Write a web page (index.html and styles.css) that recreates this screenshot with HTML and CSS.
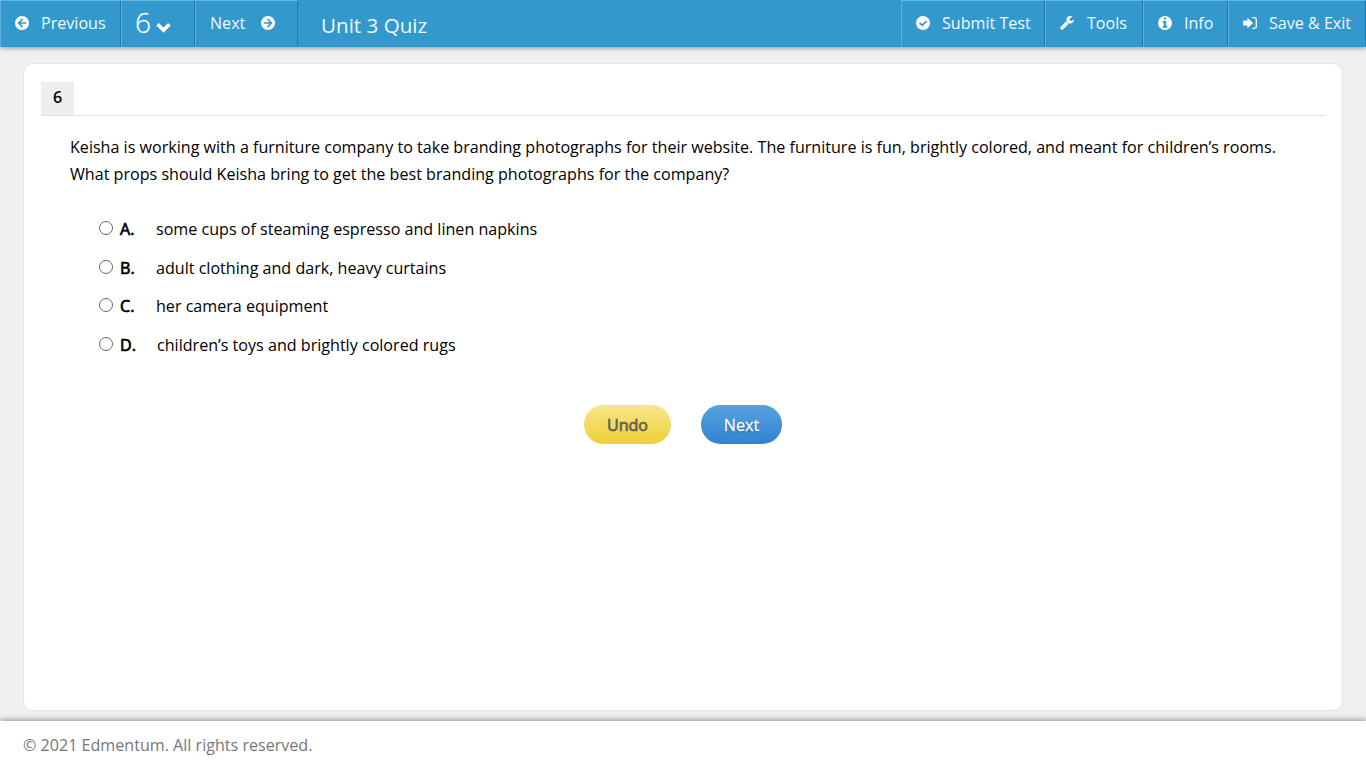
FILE: index.html
```html
<!DOCTYPE html>
<html lang="en">
<head>
    <meta charset="UTF-8">
    <meta name="viewport" content="width=device-width, initial-scale=1.0">
    <title>Unit 3 Quiz</title>
    <link rel="stylesheet" href="styles.css">
</head>
<body>

    <header class="toolbar">
        <a class="tool previous">
            <svg class="icon" viewBox="0 0 14 14"><circle cx="7" cy="7" r="7"/><path class="cut" d="M11.2 7H4M7.4 3.2L3.6 7l3.8 3.8"/></svg>
            <span>Previous</span>
        </a>
        <a class="tool current">
            <span class="number">6</span>
            <svg class="chevron" viewBox="0 0 14 10"><path d="M1.5 2L7 7.5 12.5 2"/></svg>
        </a>
        <a class="tool next">
            <span>Next</span>
            <svg class="icon" viewBox="0 0 14 14"><circle cx="7" cy="7" r="7"/><path class="cut" d="M2.8 7H10M6.6 3.2L10.4 7l-3.8 3.8"/></svg>
        </a>
        <h1 class="title">Unit 3 Quiz</h1>
        <a class="tool submit">
            <svg class="icon" viewBox="0 0 14 14"><circle cx="7" cy="7" r="7"/><path class="cut" d="M3.6 6.8l2.6 2.6 4.3-4.3"/></svg>
            <span>Submit Test</span>
        </a>
        <a class="tool tools">
            <svg class="icon" viewBox="64 128 1664 1664"><path d="M448 1472q0-26-19-45t-45-19-45 19-19 45 19 45 45 19 45-19 19-45zm644-420l-682 682q-37 37-90 37-52 0-91-37l-106-108q-38-36-38-90 0-53 38-91l681-681q39 98 114.5 173.5t173.5 114.5zm634-435q0 39-23 106-47 134-164.5 217.5t-258.5 83.5q-185 0-316.5-131.5t-131.5-316.5 131.5-316.5 316.5-131.5q58 0 121.5 16.5t107.5 46.5q16 11 16 28t-16 28l-293 169v224l193 107q5-3 79-48.5t135.5-81 70.5-35.5q15 0 23.5 10t8.5 25z"/></svg>
            <span>Tools</span>
        </a>
        <a class="tool info">
            <svg class="icon" viewBox="0 0 14 14"><circle cx="7" cy="7" r="7"/><path class="hole" d="M5.8 1.5h2.4v2H5.8zM4.7 5.1h3.5v4.8h1.1v1.9H4.7V9.9h1.1V7H4.7z"/></svg>
            <span>Info</span>
        </a>
        <a class="tool exit">
            <svg class="icon" viewBox="0 0 14 14"><path d="M0 4.6h4.5V1.8L10 7l-5.500 5.200V9.400H0z"/><path class="door" d="M9.2 1.700h2.300q1.800 0 1.800 1.800v7q0 1.800-1.800 1.800H9.200"/></svg>
            <span>Save &amp; Exit</span>
        </a>
    </header>

    <main class="page">
        <section class="card">
            <div class="question-head">
                <span class="question-number">6</span>
            </div>
            <p class="question">Keisha is working with a furniture company to take branding photographs for their website. The furniture is fun, brightly colored, and meant for children’s rooms. What props should Keisha bring to get the best branding photographs for the company?</p>
            <div class="answers">
                <label class="answer"><input type="radio" name="answer"><b>A.</b><span>some cups of steaming espresso and linen napkins</span></label>
                <label class="answer"><input type="radio" name="answer"><b>B.</b><span>adult clothing and dark, heavy curtains</span></label>
                <label class="answer"><input type="radio" name="answer"><b>C.</b><span>her camera equipment</span></label>
                <label class="answer answer-d"><input type="radio" name="answer"><b>D.</b><span>children’s toys and brightly colored rugs</span></label>
            </div>
            <div class="buttons">
                <button class="btn btn-undo">Undo</button>
                <button class="btn btn-next">Next</button>
            </div>
        </section>
    </main>

    <footer class="footer">© 2021 Edmentum. All rights reserved.</footer>

</body>
</html>
```
FILE: styles.css
```css
* {
    box-sizing: border-box;
}

body {
    margin: 0;
    height: 100vh;
    display: flex;
    flex-direction: column;
    overflow: hidden;
    background: #f0f0f0;
    color: #000;
    font-family: "Open Sans", sans-serif;
    font-size: 16.1px;
}

/* Top bar */
.toolbar {
    display: flex;
    height: 47px;
    flex-shrink: 0;
    background: #3399cc;
    color: #f0f9ff;
    box-shadow: 0 1px 5px rgba(0, 0, 0, 0.4);
}

.tool {
    display: flex;
    align-items: center;
    height: 46px;
    padding: 0 0 1px 14px;
    border-top: 1px solid #66bbe6;
    border-left: 1px solid #5bb2de;
    border-right: 1px solid #2479a5;
    white-space: nowrap;
    line-height: 22px;
}

.icon {
    width: 14px;
    height: 14px;
    margin-right: 12px;
    fill: #fff;
}

.cut {
    fill: none;
    stroke: #3399cc;
    stroke-width: 1.7;
}

.hole {
    fill: #3399cc;
}

.door {
    fill: none;
    stroke: #fff;
    stroke-width: 1.3;
}

.previous {
    width: 121px;
}

.current {
    width: 74px;
}

.number {
    margin: -2px 0 0 -1px;
    font-size: 28px;
    font-weight: 300;
    -webkit-text-stroke: 0.3px #f0f9ff;
}

.chevron {
    width: 15px;
    height: 11px;
    margin: 9px 0 0 5px;
    fill: none;
    stroke: #fff;
    stroke-width: 3.4;
}

.next {
    width: 103px;
}

.next .icon {
    margin: 0 0 0 16px;
}

.title {
    flex: 1;
    margin: 0;
    padding: 3px 0 0 23px;
    font-size: 20.6px;
    font-weight: 400;
    line-height: 45px;
}

.submit {
    width: 144px;
}

.tools {
    width: 98px;
}

.tools .icon {
    margin-right: 13px;
}

.info {
    width: 85px;
}

.exit {
    width: 138px;
}

/* Question card */
.page {
    flex: 1;
    padding: 16px 23px 10px;
}

.card {
    height: 648px;
    padding: 18px 17px;
    background: #fff;
    border: 1px solid #e4e4e4;
    border-radius: 10px;
}

.question-head {
    display: flex;
    height: 34px;
    border-bottom: 1px solid #e0e0e0;
}

.question-number {
    width: 33px;
    background: #eee;
    font-weight: 600;
    line-height: 31px;
    text-align: center;
}

.question {
    margin: 18px 20px 0 29px;
    line-height: 27px;
}

.answers {
    margin: 30px 0 0 58px;
}

.answer {
    display: flex;
    align-items: center;
    height: 22px;
    margin-bottom: 16.6px;
}

.answer input {
    appearance: none;
    width: 14px;
    height: 14px;
    margin: 0 7px 2px 0;
    border: 1px solid #666;
    border-radius: 50%;
    background: #fff;
}

.answer b {
    width: 36px;
    font-weight: 400;
    -webkit-text-stroke: 0.7px #000;
}

.answer-d b {
    width: 37px;
}

.buttons {
    display: flex;
    justify-content: center;
    gap: 30px;
    margin-top: 49px;
}

.btn {
    height: 39px;
    padding: 1px 0 0;
    border: 0;
    border-radius: 20px;
    font: inherit;
}

.btn-undo {
    width: 87px;
    background: linear-gradient(#f8e58c, #edd036);
    color: #666052;
    -webkit-text-stroke: 0.7px #666052;
}

.btn-next {
    width: 81px;
    background: linear-gradient(#59a2df, #3182d2);
    color: #fff;
    -webkit-text-stroke: 0.3px #fff;
    text-shadow: 0 1px 2px rgba(0, 0, 0, 0.4);
}

.footer {
    height: 47px;
    flex-shrink: 0;
    padding-left: 23px;
    background: #fff;
    box-shadow: 0 -1px 6px rgba(0, 0, 0, 0.4);
    color: #777;
    line-height: 48px;
}
```
